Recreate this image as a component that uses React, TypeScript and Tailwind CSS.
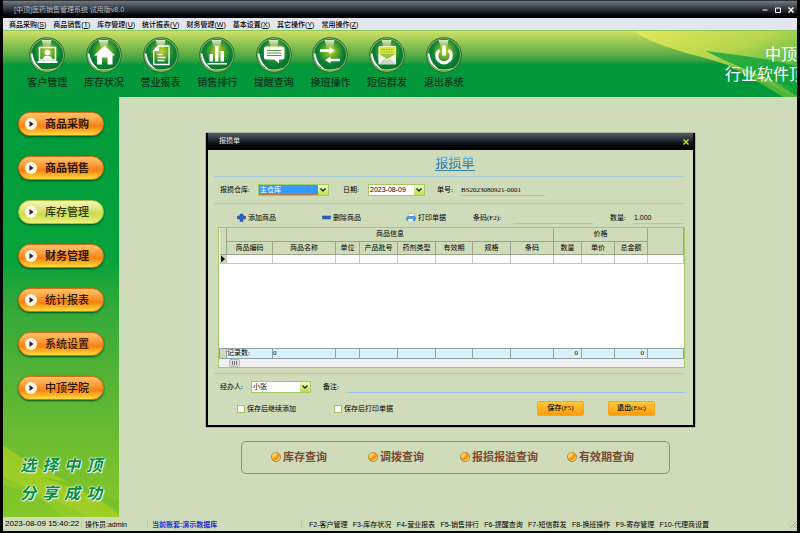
import type { ReactNode } from "react";
import clsx from "clsx";

const menuItems = [
    { label: "商品采购", key: "S" },
    { label: "商品销售", key: "T" },
    { label: "库存管理", key: "U" },
    { label: "统计报表", key: "V" },
    { label: "财务管理", key: "W" },
    { label: "基本设置", key: "X" },
    { label: "其它操作", key: "Y" },
    { label: "常用操作", key: "Z" },
];

const toolbarItems: { label: string; icon: ReactNode }[] = [
    {
        label: "客户管理",
        icon: (
            <g>
                <path d="M10.5 10.5h16v12.500h-16z" fill="none" stroke="#fff" strokeWidth="1.500" />
                <circle cx="18.500" cy="15.500" r="2.800" fill="#fff" />
                <path d="M13.500 22.500c.5-5 9.500-5 10 0z" fill="#fff" />
                <path d="M8.500 24h20v2h-20z" fill="#fff" />
            </g>
        ),
    },
    {
        label: "库存状况",
        icon: <path d="M18.500 8.500L29 18.500h-2.500V27.500h-5v-7h-5.500v7h-5v-9H8z" fill="#fff" />,
    },
    {
        label: "营业报表",
        icon: (
            <g fill="none" stroke="#fff" strokeWidth="1.300">
                <path d="M15.500 9h10.500v18.500H10.800V13.500z" />
                <path d="M15.500 9v4.500h-4.700z" fill="#fff" />
                <path d="M14.500 17.500h5M14.500 20.500h8M14.500 23.500h7" />
            </g>
        ),
    },
    {
        label: "销售排行",
        icon: (
            <path
                d="M10.500 17h3.500v7.500h-3.500zM16 9h3.500v15.500H16zM21.500 14H25v10.500h-3.500zM8.500 26h19.500v1.500H8.500z"
                fill="#fff"
            />
        ),
    },
    {
        label: "提醒查询",
        icon: (
            <g>
                <path
                    d="M10 9.500h16.500a2 2 0 0 1 2 2v9a2 2 0 0 1-2 2h-3.500v4l-4.500-4H10a2 2 0 0 1-2-2v-9a2 2 0 0 1 2-2z"
                    fill="#fff"
                />
                <path d="M11 13.500h14.500M11 16h14.500M11 18.500h14.500" stroke="#4f9a43" strokeWidth="1" />
            </g>
        ),
    },
    {
        label: "换班操作",
        icon: (
            <path
                d="M8 12.300h9.500v-2.300l5.500 3.600-5.500 3.600v-2.300H8zM28 21.700h-9.500v-2.300L13 23l5.500 3.600v-2.300H28z"
                fill="#fff"
            />
        ),
    },
    {
        label: "短信群发",
        icon: (
            <g>
                <path d="M10 9.500h16.500v14H10z" fill="#dbe63c" stroke="#f4f7d8" strokeWidth="1" />
                <path d="M12 12.500h12.500M12 15h12.500" stroke="#a4a81e" strokeDasharray="1.500 1" />
                <path d="M10 17l8.200 5 8.300-5z" fill="#5da83a" opacity=".55" />
                <path d="M9.500 16.500l8.700 6 8.800-6v10.800H9.500z" fill="#f3f5ef" />
                <path d="M9.500 27.300l6-5.800 2.700 1.800 2.800-1.800 6 5.800z" fill="#cfd4cb" />
            </g>
        ),
    },
    {
        label: "退出系统",
        icon: (
            <g fill="none" stroke="#fff" strokeWidth="3.200">
                <path d="M13.500 13a7.200 7.200 0 1 0 9 0" />
                <path d="M18 8.500v10" strokeWidth="3.600" />
            </g>
        ),
    },
];

const sideItems = [
    { label: "商品采购", weight: "font-bold" },
    { label: "商品销售", weight: "font-bold" },
    { label: "库存管理", weight: "font-medium", active: true },
    { label: "财务管理", weight: "font-bold" },
    { label: "统计报表", weight: "font-medium" },
    { label: "系统设置", weight: "font-medium" },
    { label: "中顶学院", weight: "font-medium" },
];

const columns = [
    { title: "商品编码", width: 46 },
    { title: "商品名称", width: 63 },
    { title: "单位", width: 24 },
    { title: "产品批号", width: 38 },
    { title: "药剂类型", width: 38 },
    { title: "有效期", width: 37 },
    { title: "规格", width: 38 },
    { title: "条码", width: 43 },
    { title: "数量", width: 28, total: "0" },
    { title: "单价", width: 33 },
    { title: "总金额", width: 33, total: "0" },
];

const queries = ["库存查询", "调拨查询", "报损报溢查询", "有效期查询"];

const hotkeys = [
    "F2-客户管理",
    "F3-库存状况",
    "F4-营业报表",
    "F5-销售排行",
    "F6-提醒查询",
    "F7-短信群发",
    "F8-换班操作",
    "F9-寄存管理",
    "F10-代理商设置",
];

function Orb({ children }: { children: ReactNode }) {
    return (
        <svg viewBox="0 0 36 36" className="size-9">
            <circle cx="18" cy="18" r="17.800" fill="#2c6b33" />
            <circle cx="18" cy="18" r="16.800" fill="#8fbd6a" />
            <circle cx="18" cy="18" r="16" fill="url(#orb)" />
            <path d="M12.500 3h10l-1.500 8h-6z" fill="url(#gloss)" />
            <path d="M2 16.500c0 9 5.500 14.500 12 16.500-5-3.500-9.500-8.500-10.500-16.500z" fill="#fff" />
            <path d="M8.500 31c6 4 14 3.500 19.500-.5-6 2.200-13 2.600-19.500.5z" fill="#d5dd6a" />
            {children}
        </svg>
    );
}

function TitleBar() {
    return (
        <div className="flex h-[18px] items-center justify-between border-t border-[#30343a] bg-linear-to-b from-[#727a82] via-[#1c242d] via-60% to-black pr-[3px] pl-[11px]">
            <h1 className="text-[7px] leading-none text-[#b4b9be]">[中顶]医药销售管理系统 试用版v8.0</h1>
            <div className="flex gap-[7px]">
                <button aria-label="最小化" className="size-[6px]">
                    <svg viewBox="0 0 6 6"><path d="M.5 3h5" stroke="#fff" /></svg>
                </button>
                <button aria-label="最大化" className="size-[6px]">
                    <svg viewBox="0 0 6 6"><path d="M.5 1h5v4.500h-5z" stroke="#fff" fill="none" /></svg>
                </button>
                <button aria-label="关闭" className="size-[6px]">
                    <svg viewBox="0 0 6 6"><path d="M.5.5l5 5M5.500.5l-5 5" stroke="#fff" strokeWidth="1.500" /></svg>
                </button>
            </div>
        </div>
    );
}

function Header() {
    return (
        <header className="relative flex justify-between overflow-hidden border-t border-[#86c95c] bg-linear-to-b from-[#cde063] via-[#03993b] via-50% to-[#03983b] pt-[6px] pb-[9px] pl-4">
            <svg
                viewBox="0 0 170 67"
                preserveAspectRatio="none"
                className="absolute top-0 right-0 h-full w-[170px]"
            >
                <path d="M6 0C34 18 62 22 90 31C125 42 150 56 162 67H170V0z" fill="url(#swoosh)" />
                <path d="M78 20C105 24 140 27 170 36V60C140 48 105 34 78 20z" fill="#08a03a" opacity=".75" />
                <path d="M84 26C110 35 140 46 170 66V67H156C135 54 110 40 84 26z" fill="#8fca3a" opacity=".55" />
            </svg>
            <nav className="grid w-[453px] grid-cols-8">
                {toolbarItems.map((item) => (
                    <button key={item.label} className="flex flex-col items-center gap-[5px]">
                        <Orb>{item.icon}</Orb>
                        <span className="text-[10px] leading-[10px] font-medium whitespace-nowrap text-[#04351a]">
                            {item.label}
                        </span>
                    </button>
                ))}
            </nav>
            <div className="relative w-[72px] overflow-hidden pt-2 text-[16px] leading-[20px] whitespace-nowrap text-white">
                <p className="pl-10">中顶</p>
                <p>行业软件顶</p>
            </div>
        </header>
    );
}

function Sidebar() {
    return (
        <aside className="relative flex w-[116px] shrink-0 flex-col justify-between overflow-hidden bg-linear-to-b from-[#009a3b] via-[#07a33b] via-40% to-[#86c728] pt-[15px] pb-[14px]">
            <svg
                viewBox="0 0 116 90"
                preserveAspectRatio="none"
                className="absolute bottom-0 left-0 h-[90px] w-full"
            >
                <path d="M0 18C30 42 75 54 116 88V90H85C60 76 25 62 0 50z" fill="#aed31f" opacity=".65" />
                <path d="M0 26C35 54 70 64 100 90H60C45 72 20 64 0 58z" fill="#9fd02a" opacity=".5" />
                <path d="M40 50C60 60 95 66 116 84V74C90 62 70 56 40 50z" fill="#6dbb2c" opacity=".5" />
            </svg>
            <nav className="relative flex flex-col gap-5 pl-[15px]">
                {sideItems.map((item) => (
                    <button
                        key={item.label}
                        className={clsx(
                            "flex h-6 w-[86px] items-center gap-2 rounded-full border pl-[6px] text-[11px] leading-none shadow-[0_1px_2px_#00501e]",
                            item.weight,
                            item.active
                                ? "border-[#a9c23e] bg-linear-to-b from-[#f8f9b8] via-[#ccd94e] via-60% to-[#f0f27a] text-[#2c3a10]"
                                : "border-[#e06a10] bg-linear-to-b from-[#ffc66a] via-[#f6800c] via-60% to-[#ffdc3a] text-[#2d1604]",
                        )}
                    >
                        <svg viewBox="0 0 12 12" className="size-3">
                            <circle cx="6" cy="6" r="6" fill="#fdf6e6" />
                            <path d="M4.500 3l4 3-4 3z" fill="#222" />
                        </svg>
                        {item.label}
                    </button>
                ))}
            </nav>
            <div className="relative flex flex-col gap-[10px] px-[17px] font-['Liberation_Serif','Noto_Sans_CJK_SC',serif] text-[16px] leading-[18px] font-bold text-[#048f3c] italic [text-shadow:0_0_1px_#fff,0_0_1px_#fff,0_0_2px_#fff,1px_1px_1px_#fff]">
                {["选择中顶", "分享成功"].map((line) => (
                    <p key={line} className="flex justify-between">
                        {line.split("").map((char) => (
                            <span key={char}>{char}</span>
                        ))}
                    </p>
                ))}
            </div>
        </aside>
    );
}

function DropArrow() {
    return (
        <span className="pointer-events-none flex w-[10px] shrink-0 items-center justify-center bg-linear-to-b from-[#eef8c0] to-[#b9e052]">
            <svg viewBox="0 0 6 4" className="h-1 w-[6px]">
                <path d="M.5.5L3 3 5.500.5" fill="none" stroke="#1b2a08" strokeWidth="1.400" />
            </svg>
        </span>
    );
}

function ItemsTable() {
    return (
        <div className="mr-[8px] ml-[10px] border border-[#a3ca66] bg-white">
            <table className="w-full table-fixed border-collapse text-center leading-[8px] [&_td]:p-0 [&_th]:p-0 [&_th]:font-normal">
                <colgroup>
                    <col style={{ width: 7 }} />
                    {columns.map((col) => (
                        <col key={col.title} style={{ width: col.width }} />
                    ))}
                    <col />
                </colgroup>
                <thead className="bg-[#cfdcba] [&_th]:border-r [&_th]:border-b [&_th]:border-[#9aa58c]">
                    <tr className="h-[13px]">
                        <th rowSpan={2} />
                        <th colSpan={8}>商品信息</th>
                        <th colSpan={3}>价格</th>
                        <th rowSpan={2} />
                    </tr>
                    <tr className="h-[13px]">
                        {columns.map((col) => (
                            <th key={col.title} className="whitespace-nowrap">{col.title}</th>
                        ))}
                    </tr>
                </thead>
                <tbody>
                    <tr className="h-[9px] [&_td]:border-r [&_td]:border-b [&_td]:border-[#c4c8c4]">
                        <td className="bg-[#cfdcba]">
                            <svg viewBox="0 0 6 8" className="h-2 w-[6px]"><path d="M1 .5l4 3.500-4 3.500z" /></svg>
                        </td>
                        {columns.map((col) => (
                            <td key={col.title} />
                        ))}
                        <td />
                    </tr>
                    <tr className="h-[85px]">
                        <td colSpan={13} />
                    </tr>
                </tbody>
                <tfoot>
                    <tr className="h-[10px] bg-[#d9f1fb] [&_td]:border [&_td]:border-[#8fa3a8]">
                        <td className="bg-[#cfdcba]" />
                        <td className="text-left whitespace-nowrap">记录数:</td>
                        <td className="text-left">0</td>
                        {columns.slice(2).map((col) => (
                            <td key={col.title} className="text-right">
                                {col.total && <span className="pr-[3px]">{col.total}</span>}
                            </td>
                        ))}
                        <td />
                    </tr>
                </tfoot>
            </table>
            <div className="h-2 bg-[#f0f0f0] pl-[10px]">
                <div className="flex h-2 w-[11px] items-center justify-center gap-px rounded-[2px] border border-[#b9b9b9] bg-[#dcdcdc]">
                    <i className="h-1 w-px bg-[#777]" />
                    <i className="h-1 w-px bg-[#777]" />
                    <i className="h-1 w-px bg-[#777]" />
                </div>
            </div>
        </div>
    );
}

function LossDialog() {
    return (
        <section className="border-2 border-t-0 border-black bg-[#cfdcba] text-[7px] leading-[10px] text-black shadow-[0_0_1px_#000]">
            <div className="flex h-[17px] items-center justify-between bg-linear-to-b from-[#565f69] via-[#141b24] via-55% to-black pr-1 pl-[11px]">
                <h2 className="leading-none text-[#e4e6e8]">报损单</h2>
                <button aria-label="关闭" className="size-[6px]">
                    <svg viewBox="0 0 6 6"><path d="M.5.5l5 5M5.500.5l-5 5" stroke="#b8e02c" strokeWidth="1.500" /></svg>
                </button>
            </div>

            <h3 className="mr-[9px] ml-[6px] flex h-[27px] items-center justify-center border-b border-[#a8cbdc] pl-3">
                <span className="border-b border-[#2f86ad] bg-linear-to-b from-[#6fc0ec] to-[#17648a] bg-clip-text font-['Liberation_Serif','Noto_Sans_CJK_SC',serif] text-[13px] leading-[14px] font-medium text-transparent">
                    报损单
                </span>
            </h3>

            <div className="mr-[9px] ml-[6px] flex h-[27px] items-center border-b border-[#a8cbdc] pl-[6px]">
                <label htmlFor="warehouse" className="w-[38px] whitespace-nowrap">报损仓库:</label>
                <div className="flex h-3 w-[71px] border border-[#a3ca66] bg-white">
                    <select
                        id="warehouse"
                        className="h-[10px] min-w-0 flex-1 appearance-none border border-[#c07838] bg-[#3399ff] leading-[8px] text-white"
                    >
                        <option>主仓库</option>
                    </select>
                    <DropArrow />
                </div>
                <label htmlFor="date" className="ml-[14px] w-[25px] whitespace-nowrap">日期:</label>
                <div className="flex h-3 w-[57px] border border-[#a3ca66] bg-white">
                    <input
                        id="date"
                        defaultValue="2023-08-09"
                        className="min-w-0 flex-1 pl-px font-['Liberation_Sans',sans-serif] leading-[10px]"
                    />
                    <DropArrow />
                </div>
                <label htmlFor="number" className="ml-3 w-6 whitespace-nowrap">单号:</label>
                <input
                    id="number"
                    defaultValue="BS2023080921-0001"
                    className="h-3 w-[84px] border-b border-[#9ac6e8]"
                />
            </div>

            <div className="flex h-[23px] items-center pt-1 pr-[10px] pl-[29px]">
                <button className="flex w-[85px] items-center gap-[2px]">
                    <svg viewBox="0 0 9 9" className="size-[9px]">
                        <path d="M3 1h3v2h2.500v3H6v2.500H3V6H.5V3H3z" fill="#2d62bd" stroke="#1b468f" strokeWidth=".5" />
                    </svg>
                    添加商品
                </button>
                <button className="flex w-[84px] items-center gap-[2px]">
                    <svg viewBox="0 0 9 9" className="size-[9px]">
                        <path d="M.5 3h8v3h-8z" fill="#2d62bd" stroke="#1b468f" strokeWidth=".5" />
                    </svg>
                    删除商品
                </button>
                <button className="flex w-[67px] items-center gap-[2px]">
                    <svg viewBox="0 0 10 9" className="h-[9px] w-[10px]">
                        <path d="M3 .5h5.500L7 4H2z" fill="#fff" stroke="#6a9bcf" strokeWidth=".5" />
                        <path d="M.5 4.500L2 3.500h7l.7 1.500-.7 2.500-7 .5L.5 7z" fill="#5c9fe0" stroke="#2b64ab" strokeWidth=".5" />
                        <path d="M2 6h5l-.5 2.500h-4z" fill="#e9f4ff" />
                    </svg>
                    打印单据
                </button>
                <label htmlFor="barcode" className="w-10 whitespace-nowrap">条码(F2):</label>
                <input id="barcode" className="h-3 w-20 border-b border-[#9ac6e8]" />
                <label htmlFor="quantity" className="ml-[17px] w-6 whitespace-nowrap">数量:</label>
                <input
                    id="quantity"
                    defaultValue="1.000"
                    className="h-3 min-w-0 flex-1 border-b border-[#9ac6e8] font-['Liberation_Sans',sans-serif]"
                />
            </div>

            <ItemsTable />

            <div className="mt-[5px] mr-[9px] ml-[6px] border-t border-[#a8cbdc]" />
            <div className="flex h-[26px] items-center pr-2 pl-3">
                <label htmlFor="operator" className="w-[31px] whitespace-nowrap">经办人:</label>
                <div className="flex h-3 w-[60px] border border-[#a3ca66] bg-white">
                    <select id="operator" className="min-w-0 flex-1 appearance-none pl-px leading-[10px]">
                        <option>小张</option>
                    </select>
                    <DropArrow />
                </div>
                <label htmlFor="remark" className="ml-3 w-6 whitespace-nowrap">备注:</label>
                <input id="remark" className="h-3 min-w-0 flex-1 border-b border-[#9ac6e8]" />
            </div>
            <div className="flex items-center pt-px pb-[9px] pl-[29px]">
                <label className="flex w-[97px] items-center gap-[2px] pt-[2px]">
                    <input type="checkbox" className="size-2 appearance-none border border-[#a3ca66] bg-[#fafafa]" />
                    保存后继续添加
                </label>
                <label className="flex flex-1 items-center gap-[2px] pt-[2px]">
                    <input type="checkbox" className="size-2 appearance-none border border-[#a3ca66] bg-[#fafafa]" />
                    保存后打印单据
                </label>
                <div className="flex gap-6 pr-[38px]">
                    <button className="h-[15px] w-[47px] rounded-[2px] border border-[#f5a81c] bg-linear-to-b from-[#ffc83a] to-[#ff9d05] leading-none font-medium">
                        保存(F5)
                    </button>
                    <button className="h-[15px] w-[47px] rounded-[2px] border border-[#f5a81c] bg-linear-to-b from-[#ffc83a] to-[#ff9d05] leading-none font-medium">
                        退出(Esc)
                    </button>
                </div>
            </div>
        </section>
    );
}

function QueryLinks() {
    return (
        <nav className="mt-[14px] mr-[25px] ml-[35px] grid h-[33px] grid-cols-[97fr_92fr_107fr_102fr] items-center rounded-[5px] border border-[#a98670] pl-[29px]">
            {queries.map((label) => (
                <a
                    key={label}
                    href="#"
                    className="flex items-center gap-[2px] text-[11px] leading-none font-bold whitespace-nowrap text-[#7a4a30]"
                >
                    <svg viewBox="0 0 10 10" className="size-[10px]">
                        <circle cx="5" cy="5" r="4.600" fill="#f79a10" stroke="#a5774a" strokeWidth=".7" />
                        <path d="M1 6A4 4 0 0 1 6 1C6 4 4 6 1 6z" fill="#ffc95a" />
                        <path d="M3.500 9Q7.500 8 9 4.500Q9 8.800 3.500 9z" fill="#fff3c4" />
                    </svg>
                    {label}
                </a>
            ))}
        </nav>
    );
}

function StatusBar() {
    return (
        <footer className="flex h-[14px] items-center bg-[#cfdcba] text-[7px] leading-none whitespace-nowrap text-black">
            <span className="w-[78px] pl-[2px] text-[8px]">2023-08-09 15:40:22</span>
            <span className="w-[66px] border-l border-[#b9c6a8] pl-[3px]">操作员:admin</span>
            <span className="w-[154px] border-l border-[#b9c6a8] pl-[4px] font-bold text-[#2430d8]">
                当前账套:演示数据库
            </span>
            <div className="flex w-[408px] justify-between border-l border-[#b9c6a8] pl-[7px]">
                {hotkeys.map((key) => (
                    <span key={key}>{key}</span>
                ))}
            </div>
            <svg viewBox="0 0 8 8" className="ml-auto size-2">
                <path d="M1 8l7-7M4 8l4-4M7 8l1-1" stroke="#93a080" strokeWidth=".8" />
            </svg>
        </footer>
    );
}

export default function App() {
    return (
        <div className="flex min-h-screen flex-col bg-black pr-[3px] pb-[2px] pl-[3px] font-['Liberation_Sans','Noto_Sans_CJK_SC',sans-serif]">
            <svg className="absolute size-0" aria-hidden="true">
                <defs>
                    <radialGradient id="orb" cx="52%" cy="38%" r="62%">
                        <stop offset="0" stopColor="#c9d820" />
                        <stop offset=".35" stopColor="#5fa82c" />
                        <stop offset=".65" stopColor="#0a8035" />
                        <stop offset="1" stopColor="#04702e" />
                    </radialGradient>
                    <linearGradient id="gloss" x1="0" y1="0" x2="0" y2="1">
                        <stop offset="0" stopColor="#f6f9e2" stopOpacity=".9" />
                        <stop offset="1" stopColor="#e3ea9a" stopOpacity=".2" />
                    </linearGradient>
                    <linearGradient id="swoosh" x1="0" y1="0" x2="1" y2="1">
                        <stop offset="0" stopColor="#e6e85a" />
                        <stop offset=".45" stopColor="#b4d64e" />
                        <stop offset="1" stopColor="#03a03a" />
                    </linearGradient>
                </defs>
            </svg>
            <TitleBar />
            <nav className="flex h-3 items-center gap-[7px] bg-[#e3e6ec] pl-[6px] text-[7px] leading-none font-medium whitespace-nowrap text-black">
                {menuItems.map((item) => (
                    <button key={item.key}>
                        {item.label}(<u>{item.key}</u>)
                    </button>
                ))}
            </nav>
            <Header />
            <div className="flex flex-1">
                <Sidebar />
                <main className="min-w-0 flex-1 bg-[#cfdcba] pt-9 pr-[102px] pl-[87px] font-['Liberation_Serif','Noto_Sans_CJK_SC',serif]">
                    <LossDialog />
                    <QueryLinks />
                </main>
            </div>
            <StatusBar />
        </div>
    );
}
